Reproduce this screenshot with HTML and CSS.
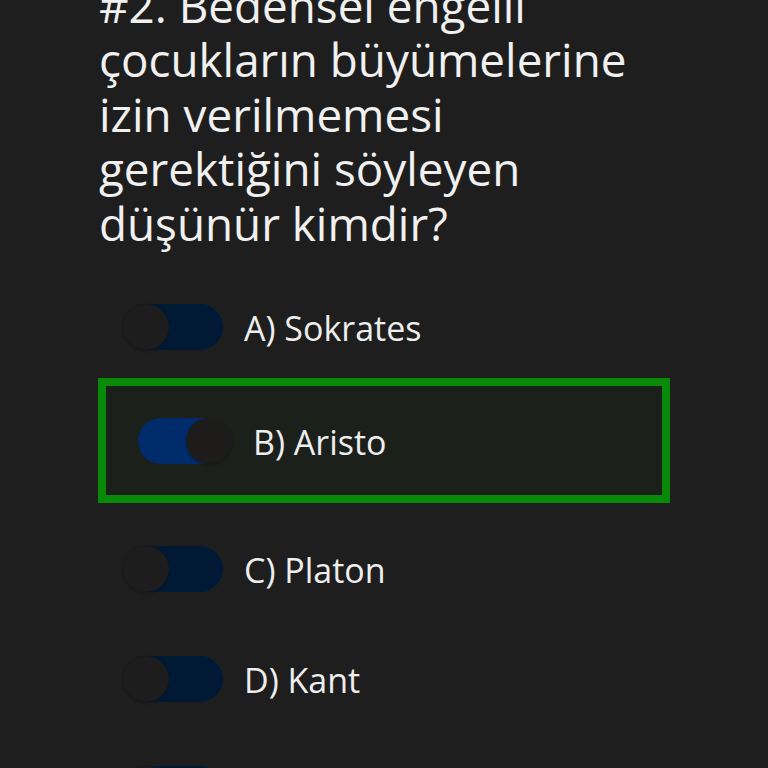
FILE: index.html
```html
<!DOCTYPE html>
<html lang="tr">
<head>
<meta charset="utf-8">
<title>Soru 2</title>
<link rel="stylesheet" href="styles.css">
</head>
<body>
<main class="quiz">
  <h1 class="question">#2. Bedensel engelli çocukların büyümelerine izin verilmemesi gerektiğini söyleyen düşünür kimdir?</h1>
  <ul class="options">
    <li class="option"><span class="toggle"><span class="thumb"></span></span><span class="label">A) Sokrates</span></li>
    <li class="option selected"><span class="toggle on"><span class="thumb"></span></span><span class="label">B) Aristo</span></li>
    <li class="option"><span class="toggle"><span class="thumb"></span></span><span class="label">C) Platon</span></li>
    <li class="option"><span class="toggle"><span class="thumb"></span></span><span class="label">D) Kant</span></li>
    <li class="option"><span class="toggle"><span class="thumb"></span></span><span class="label">E) Descartes</span></li>
  </ul>
</main>
</body>
</html>
```
FILE: styles.css
```css
html, body {
  margin: 0;
  padding: 0;
  background: #1e1e1e;
  height: 768px;
  overflow: hidden;
}

body {
  font-family: "Open Sans", "Noto Sans", sans-serif;
  color: #efefef;
}

.quiz {
  margin-left: 98px;
  width: 572px;
}

.question {
  width: 545px;
  margin: -22px 0 0 0;
  padding-left: 1px;
  font-size: 45.8px;
  font-weight: 400;
  line-height: 54.4px;
  color: #f0f0f0;
}

.options {
  list-style: none;
  margin: 27px 0 0 0;
  padding: 0;
  display: flex;
  flex-direction: column;
  gap: 10px;
}

.option {
  height: 100px;
  display: flex;
  align-items: center;
  gap: 21px;
  padding-left: 25px;
  box-sizing: border-box;
}

.option.selected {
  height: 125px;
  border: 8px solid #088a08;
  background: #1b201b;
  padding-left: 32px;
  margin: -9px 0 6px 0;
}

.label {
  font-size: 34px;
  color: #eeeeee;
  line-height: 1;
  padding-top: 2px;
}

.toggle {
  flex: none;
  width: 100px;
  height: 46px;
  border-radius: 23px;
  background: #001a36;
  display: flex;
  justify-content: flex-start;
}

.toggle.on {
  width: 94px;
  background: #002c6c;
  justify-content: flex-end;
}

.thumb {
  width: 46px;
  height: 46px;
  border-radius: 50%;
  background: #1d1d1d;
  box-shadow: 0 1px 3px rgba(0, 0, 0, 0.3);
}

.toggle.on .thumb {
  background: #1e1b1b;
}
```
